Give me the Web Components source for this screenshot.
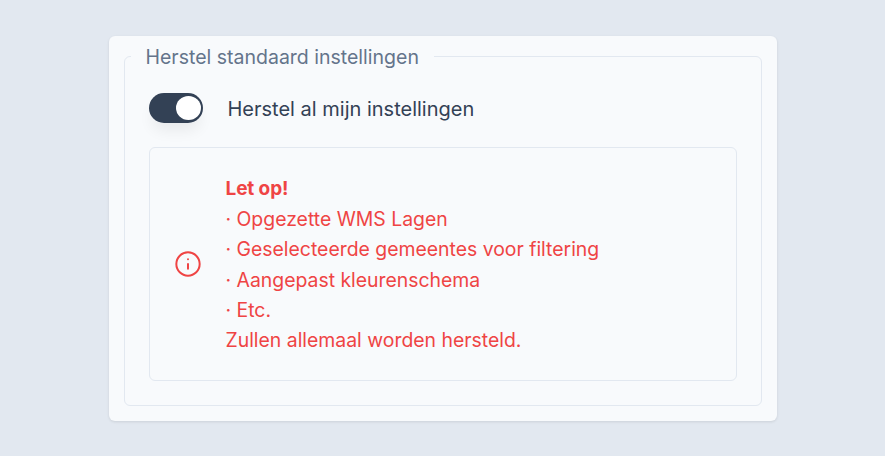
<!DOCTYPE html>
<html lang="nl">
<head>
<meta charset="utf-8">
<title>Herstel standaard instellingen</title>
<style>
  html, body { margin: 0; height: 100%; }
  body {
    background: #e2e8f0;
    font-family: "Inter", "Noto Sans", sans-serif;
    display: flex;
    justify-content: center;
    padding-top: 36px;
    box-sizing: border-box;
  }
  strong { font-weight: 700; font-size: 19px; letter-spacing: -0.1px; }
</style>
</head>
<body>
<settings-card>
  <span slot="legend">Herstel standaard instellingen</span>
  <toggle-row>Herstel al mijn instellingen</toggle-row>
  <alert-box>
    <strong>Let op!</strong><br>
    · Opgezette WMS Lagen<br>
    · Geselecteerde gemeentes voor filtering<br>
    · Aangepast kleurenschema<br>
    · Etc.<br>
    Zullen allemaal worden hersteld.
  </alert-box>
</settings-card>

<script>
class SettingsCard extends HTMLElement {
  constructor() {
    super();
    this.attachShadow({ mode: "open" });
    this.shadowRoot.innerHTML = `
      <style>
        :host {
          display: block;
          box-sizing: border-box;
          width: 668px;
          height: 385px;
          padding: 10px 15px 15px;
          background: #f8fafc;
          border-radius: 6px;
          box-shadow: 0 1px 3px rgb(0 0 0 / 0.1);
        }
        fieldset {
          box-sizing: border-box;
          height: 100%;
          margin: 0;
          padding: 26px 24px 24px 24px;
          border: 1px solid #e2e8f0;
          border-radius: 6px;
          display: flex;
          flex-direction: column;
          gap: 24px;
        }
        legend {
          margin-left: -18px;
          padding: 0 15px;
          height: 21px;
          color: #64748b;
          font-size: 19.5px;
          line-height: 23px;
        }
      </style>
      <fieldset>
        <legend><slot name="legend"></slot></legend>
        <slot></slot>
      </fieldset>
    `;
  }
}

class ToggleRow extends HTMLElement {
  constructor() {
    super();
    this.attachShadow({ mode: "open" });
    this.shadowRoot.innerHTML = `
      <style>
        :host {
          display: flex;
          align-items: center;
          gap: 25px;
          color: #334155;
          font-size: 20px;
        }
        .track {
          flex: none;
          box-sizing: border-box;
          width: 54px;
          height: 30px;
          padding: 3px 2px;
          display: flex;
          justify-content: flex-end;
          background: #334155;
          border-radius: 15px;
          box-shadow: 0 10px 15px -3px rgb(0 0 0 / 0.07);
        }
        .knob {
          width: 25px;
          height: 24px;
          background: #fff;
          border-radius: 50%;
        }
        .label { padding-top: 2px; }
      </style>
      <span class="track"><span class="knob"></span></span>
      <span class="label"><slot></slot></span>
    `;
  }
}

class AlertBox extends HTMLElement {
  constructor() {
    super();
    this.attachShadow({ mode: "open" });
    this.shadowRoot.innerHTML = `
      <style>
        :host {
          display: flex;
          align-items: center;
          gap: 24px;
          box-sizing: border-box;
          height: 234px;
          padding: 0 24px;
          border: 1px solid #e2e8f0;
          border-radius: 6px;
          color: #ef4444;
          font-size: 19.4px;
          line-height: 30.3px;
        }
        svg { flex: none; width: 28px; height: 28px; }
      </style>
      <svg viewBox="0 0 24 24" fill="none" stroke="currentColor" stroke-width="1.7" stroke-linecap="round" stroke-linejoin="round">
        <circle cx="12" cy="12" r="10"/>
        <path d="M12 16v-4M12 8h.01"/>
      </svg>
      <div><slot></slot></div>
    `;
  }
}

customElements.define("settings-card", SettingsCard);
customElements.define("toggle-row", ToggleRow);
customElements.define("alert-box", AlertBox);
</script>
</body>
</html>
